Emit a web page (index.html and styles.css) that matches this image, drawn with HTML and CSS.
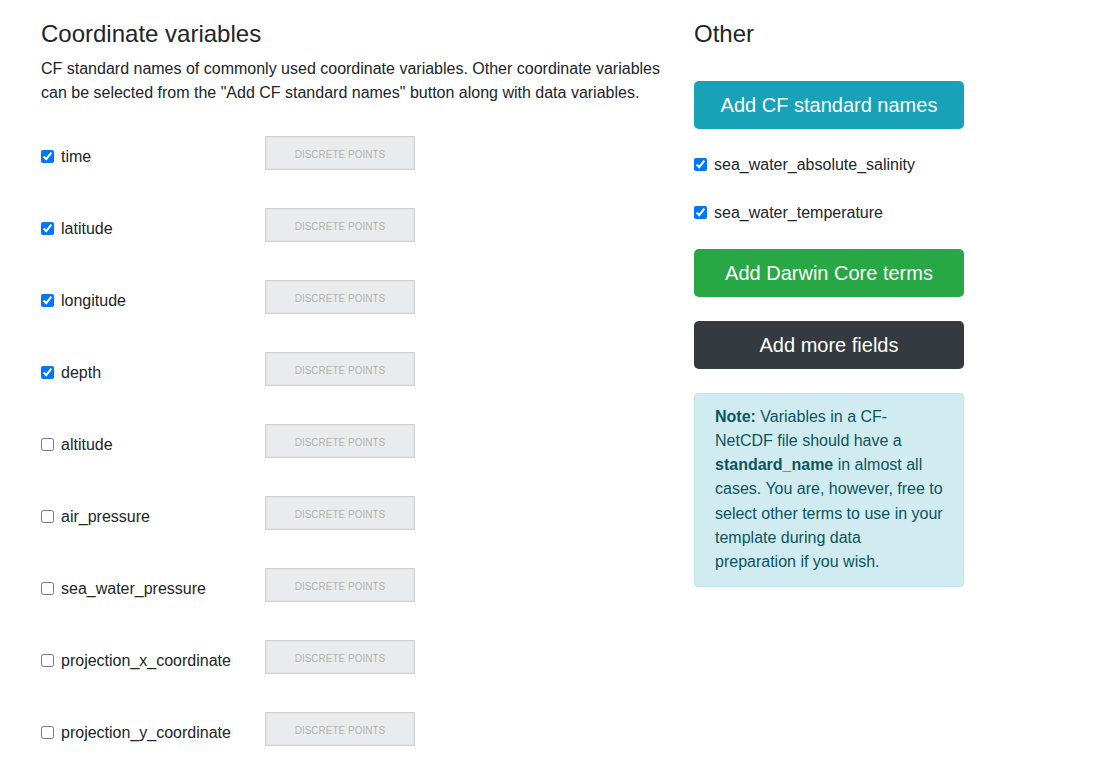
FILE: index.html
```html
<!DOCTYPE html>
<html>
<head>
<meta charset="utf-8">
<link rel="stylesheet" href="styles.css">
</head>
<body>
<div class="page">
  <section class="left">
    <h4 class="title">Coordinate variables</h4>
    <p class="intro">CF standard names of commonly used coordinate variables. Other coordinate variables can be selected from the "Add CF standard names" button along with data variables.</p>
    <div class="rows">
      <div class="row"><label class="check"><input type="checkbox" checked><span>time</span></label><button class="dp">DISCRETE POINTS</button></div>
      <div class="row"><label class="check"><input type="checkbox" checked><span>latitude</span></label><button class="dp">DISCRETE POINTS</button></div>
      <div class="row"><label class="check"><input type="checkbox" checked><span>longitude</span></label><button class="dp">DISCRETE POINTS</button></div>
      <div class="row"><label class="check"><input type="checkbox" checked><span>depth</span></label><button class="dp">DISCRETE POINTS</button></div>
      <div class="row"><label class="check"><input type="checkbox"><span>altitude</span></label><button class="dp">DISCRETE POINTS</button></div>
      <div class="row"><label class="check"><input type="checkbox"><span>air_pressure</span></label><button class="dp">DISCRETE POINTS</button></div>
      <div class="row"><label class="check"><input type="checkbox"><span>sea_water_pressure</span></label><button class="dp">DISCRETE POINTS</button></div>
      <div class="row"><label class="check"><input type="checkbox"><span>projection_x_coordinate</span></label><button class="dp">DISCRETE POINTS</button></div>
      <div class="row"><label class="check"><input type="checkbox"><span>projection_y_coordinate</span></label><button class="dp">DISCRETE POINTS</button></div>
    </div>
  </section>
  <section class="right">
    <h4 class="title">Other</h4>
    <div class="stack">
      <button class="btn btn-info">Add CF standard names</button>
      <label class="check"><input type="checkbox" checked><span>sea_water_absolute_salinity</span></label>
      <label class="check"><input type="checkbox" checked><span>sea_water_temperature</span></label>
      <button class="btn btn-success">Add Darwin Core terms</button>
      <button class="btn btn-dark">Add more fields</button>
      <div class="note"><b>Note:</b> Variables in a CF-NetCDF file should have a <b>standard_name</b> in almost all cases. You are, however, free to select other terms to use in your template during data preparation if you wish.</div>
    </div>
  </section>
</div>
</body>
</html>
```

FILE: styles.css
```css
* { box-sizing: border-box; }
html, body { margin: 0; padding: 0; background: #fff; }
body {
  font-family: "Liberation Sans", Arial, sans-serif;
  font-size: 16px;
  line-height: 1.5;
  color: #212529;
}
.page {
  display: grid;
  grid-template-columns: 653px 270px;
  padding: 20px 0 0 41px;
}
.title {
  margin: 0 0 8px;
  font-size: 24px;
  font-weight: 400;
  line-height: 1.2;
}
.intro {
  margin: 0;
  width: 628px;
}
.rows {
  margin-top: 31px;
  display: flex;
  flex-direction: column;
  gap: 38px;
}
.row {
  display: grid;
  grid-template-columns: 224px 150px;
  height: 34px;
}
.check {
  display: flex;
  align-items: center;
  height: 24px;
}
.row .check { margin-top: 9px; }
.check input {
  width: 13px;
  height: 13px;
  margin: 0 7px 0 0;
}
.dp {
  width: 150px;
  height: 34px;
  background: #eaebed;
  border: 1px solid #d2d2d2;
  box-shadow: inset 0 0 0 1px #e2e2e2;
  color: #b3b3b3;
  font-family: "Liberation Sans", Arial, sans-serif;
  font-size: 10px;
  padding: 3px 0 0;
}
.right .title { margin-bottom: 32px; }
.stack {
  display: flex;
  flex-direction: column;
  gap: 24px;
}
.btn {
  width: 270px;
  height: 48px;
  border: 1px solid transparent;
  border-radius: 4.8px;
  color: #fff;
  font-family: "Liberation Sans", Arial, sans-serif;
  font-size: 20px;
  line-height: 1.5;
  padding: 8px 16px;
}
.btn-info { background: #17a2b8; }
.btn-success { background: #28a745; }
.btn-dark { background: #343a40; }
.note {
  width: 270px;
  padding: 11px 20px 12px;
  line-height: 24.2px;
  background: #d1ecf1;
  border: 1px solid #bee5eb;
  border-radius: 4px;
  color: #0c5460;
}
.note b { font-weight: 700; }
```
